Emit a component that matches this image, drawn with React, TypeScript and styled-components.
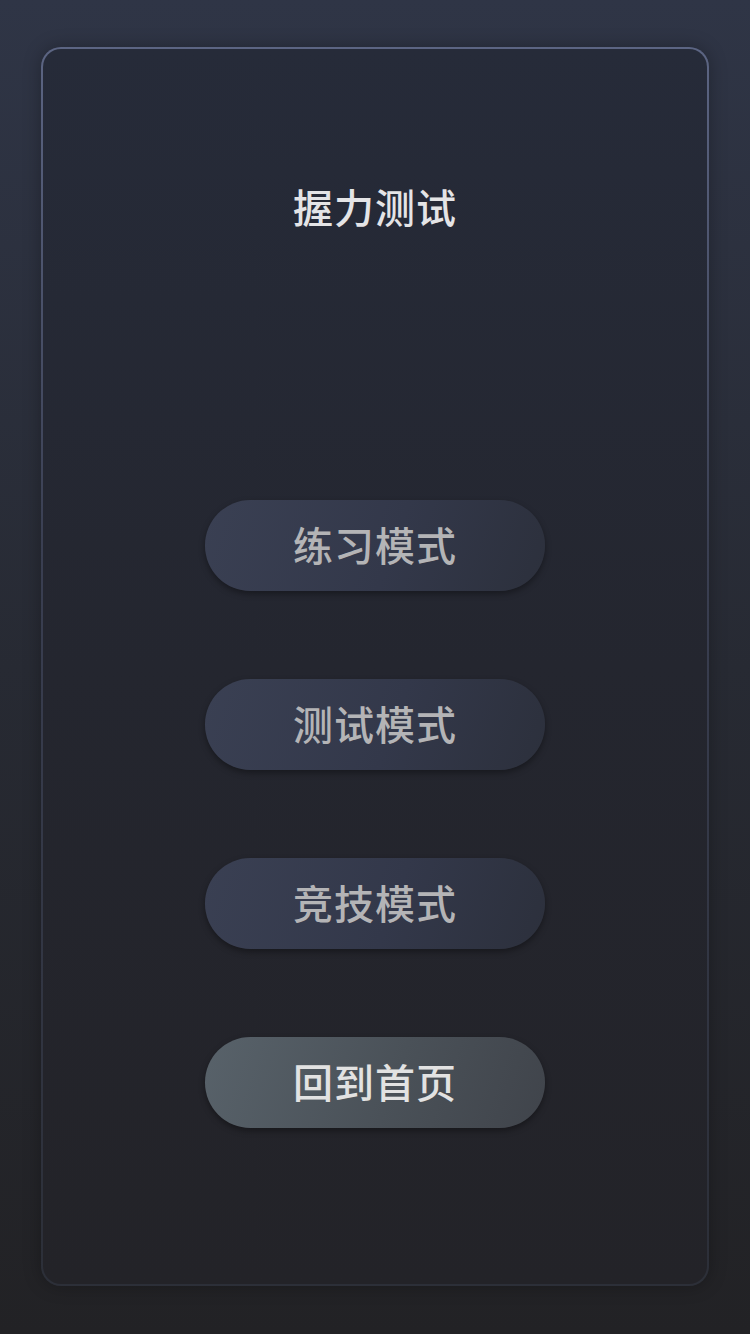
import React from "react";
import styled, { createGlobalStyle } from "styled-components";

const Global = createGlobalStyle`
  html, body { margin: 0; padding: 0; }
  body {
    min-height: 1334px;
    background: linear-gradient(180deg, #2f3546 0%, #272a33 50%, #222225 100%);
    font-family: "Noto Sans CJK SC", "Noto Sans", sans-serif;
  }
`;

const Page = styled.div`
  box-sizing: border-box;
  height: 1334px;
  padding: 47px 41px 48px;
  display: flex;
`;

const Card = styled.div`
  flex: 1;
  box-sizing: border-box;
  border-radius: 20px;
  border: 2px solid transparent;
  background:
    linear-gradient(180deg, #262b39 0%, #24262f 50%, #232328 100%) padding-box,
    linear-gradient(180deg, #5c6583 0%, #3a3f52 40%, #2c2f38 100%) border-box;
  box-shadow: 0 0 18px rgba(0, 0, 0, 0.28);
  display: flex;
  flex-direction: column;
  align-items: center;
  padding-top: 129px;
`;

const Title = styled.h1`
  margin: 0;
  font-size: 40px;
  line-height: 56px;
  font-weight: 500;
  color: #e4e4e6;
  letter-spacing: 1px;
`;

const Buttons = styled.div`
  margin-top: 266px;
  display: flex;
  flex-direction: column;
  gap: 88px;
`;

const Btn = styled.button<{ $home?: boolean }>`
  width: 340px;
  height: 91px;
  border: none;
  border-radius: 46px;
  font-family: inherit;
  font-size: 40px;
  font-weight: 500;
  letter-spacing: 1px;
  color: ${(p) => (p.$home ? "#e2e2e2" : "#b4b4b6")};
  background: ${(p) =>
    p.$home
      ? "linear-gradient(110deg, #58626a 0%, #4a5158 55%, #40444b 100%)"
      : "linear-gradient(110deg, #3a4053 0%, #33384a 55%, #2c303c 100%)"};
  box-shadow: 0 3px 6px rgba(0, 0, 0, 0.35);
  display: flex;
  align-items: center;
  justify-content: center;
  padding: 0 0 3px;
  cursor: pointer;
`;

export default function App() {
  return (
    <>
      <Global />
      <Page>
        <Card>
          <Title>握力测试</Title>
          <Buttons>
            <Btn>练习模式</Btn>
            <Btn>测试模式</Btn>
            <Btn>竞技模式</Btn>
            <Btn $home>回到首页</Btn>
          </Buttons>
        </Card>
      </Page>
    </>
  );
}
